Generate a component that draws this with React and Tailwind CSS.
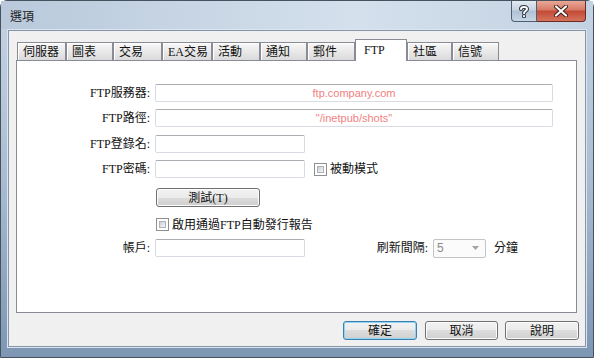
import React from "react";

const tabs = [
  { label: "伺服器", w: "w-[49px]" },
  { label: "圖表", w: "w-[47px]" },
  { label: "交易", w: "w-[49px]" },
  { label: "EA交易", w: "w-[50px]" },
  { label: "活動", w: "w-[48px]" },
  { label: "通知", w: "w-[47px]" },
  { label: "郵件", w: "w-[48px]" },
  { label: "FTP", w: "w-[52px]", active: true },
  { label: "社區", w: "w-[45px]" },
  { label: "信號", w: "w-[47px]" },
];

function Tab({ label, w, active }) {
  if (active) {
    return (
      <div
        className={`${w} relative z-10 -mb-px flex h-[22px] items-center border border-b-0 border-[#898c95] bg-white pb-[2px] pl-[8px]`}
      >
        {label}
      </div>
    );
  }
  return (
    <div
      className={`${w} flex h-[18px] items-center border border-b-0 border-[#898c95] bg-gradient-to-b from-[#f8f8f8] to-[#dadada] pl-[5px] shadow-[inset_1px_1px_0_#ffffff]`}
    >
      {label}
    </div>
  );
}

function TextBox({ w, children }) {
  return (
    <div
      className={`${w} flex h-[18px] items-center justify-center rounded-[2px] border border-[#d8dce2] border-t-[#abadb3] bg-white font-['Liberation_Sans',sans-serif] text-[11px] text-[#f27f7f]`}
    >
      {children}
    </div>
  );
}

function CheckBox() {
  return (
    <div className="h-[13px] w-[13px] shrink-0 border border-[#8e8f8f] bg-white p-[2px]">
      <div className="h-full w-full border border-[#aeb3b9] bg-gradient-to-br from-[#cbcfd5] to-[#f6f6f6]" />
    </div>
  );
}

function Button({ w, primary, children }) {
  return (
    <div
      className={`${w} flex h-[19px] items-center justify-center rounded-[3px] border bg-[linear-gradient(#f2f2f2,#ebebeb_50%,#dddddd_50%,#cfcfcf)] ${
        primary
          ? "border-[#3c7fb1] shadow-[inset_0_0_0_1px_#8fd5f3]"
          : "border-[#707070] shadow-[inset_0_0_0_1px_#fcfcfc]"
      }`}
    >
      {children}
    </div>
  );
}

function Row({ label, className = "", children }) {
  return (
    <div className={`flex h-[18px] items-center ${className}`}>
      <div className="w-[133px] text-right">{label}</div>
      <div className="ml-[5px] flex items-center">{children}</div>
    </div>
  );
}

export default function App() {
  return (
    <div className="h-[358px] w-[594px] bg-white font-['Liberation_Serif','Noto_Sans_CJK_TC',serif] text-[12px] leading-none text-[#111111]">
      <div className="flex h-full flex-col rounded-t-[7px] border border-[#47525f] bg-gradient-to-b from-[#c6d5e5] via-[#a9bcd1] to-[#7d96b2]">
        {/* title bar */}
        <div className="flex h-[28px] shrink-0 justify-between bg-[linear-gradient(90deg,#b9c9db,#d4e0ec_60%,#c3d2e2)] pr-[7px]">
          <div className="flex items-center pl-[9px] pt-[1px] font-['Noto_Sans_CJK_TC',sans-serif] text-[12px] text-[#1e1e1e]">
            選項
          </div>
          <div className="flex h-[21px]">
            <div className="flex w-[26px] items-center justify-center rounded-bl-[4px] border border-t-0 border-[#4f5f73] bg-[linear-gradient(#e2e9f1,#c7d3e0_45%,#b0c1d4_50%,#c8d6e5)]">
              <svg width="10" height="13" viewBox="0 0 10 13">
                <path d="M2 4 C2 1.5 8 1.2 8 4 C8 6 5 6 5 8.3" fill="none" stroke="#27323f" strokeWidth="4" strokeLinecap="round" />
                <circle cx="5" cy="11.2" r="2" fill="#27323f" />
                <path d="M2 4 C2 1.5 8 1.2 8 4 C8 6 5 6 5 8.3" fill="none" stroke="#ffffff" strokeWidth="2" strokeLinecap="round" />
                <circle cx="5" cy="11.2" r="1.1" fill="#ffffff" />
              </svg>
            </div>
            <div className="flex w-[49px] items-center justify-center rounded-br-[4px] border border-l-0 border-t-0 border-[#6b2a22] bg-[linear-gradient(#eaa798,#d67a66_45%,#c44a36_50%,#d4735c)]">
              <svg width="14" height="12" viewBox="0 0 14 12">
                <path d="M2 1.5 L12 10.5 M12 1.5 L2 10.5" stroke="#3b1a16" strokeWidth="4" strokeLinecap="round" />
                <path d="M2 1.5 L12 10.5 M12 1.5 L2 10.5" stroke="#ffffff" strokeWidth="2.2" strokeLinecap="round" />
              </svg>
            </div>
          </div>
        </div>

        {/* client area */}
        <div className="mx-[6px] mb-[9px] flex-1 border border-[#dce5ef]">
          <div className="flex h-full flex-col border border-[#8696aa] bg-[#f0f0f0] pt-[8px]">
            <div className="ml-[8px] flex h-[21px] items-end">
              {tabs.map((t) => (
                <Tab key={t.label} {...t} />
              ))}
            </div>

            <div className="ml-[7px] flex h-[253px] w-[561px] flex-col border border-[#898c95] bg-white pt-[23px]">
              <Row label="FTP服務器:">
                <TextBox w="w-[398px]">ftp.company.com</TextBox>
              </Row>
              <Row label="FTP路徑:" className="mt-[7px]">
                <TextBox w="w-[398px]">"/inetpub/shots"</TextBox>
              </Row>
              <Row label="FTP登錄名:" className="mt-[8px]">
                <TextBox w="w-[150px]" />
              </Row>
              <Row label="FTP密碼:" className="mt-[7px]">
                <TextBox w="w-[150px]" />
                <div className="ml-[9px] flex items-center gap-[3px]">
                  <CheckBox />
                  <span>被動模式</span>
                </div>
              </Row>
              <div className="ml-[139px] mt-[10px]">
                <Button w="w-[104px]">測試(T)</Button>
              </div>
              <div className="ml-[139px] mt-[11px] flex h-[13px] items-center gap-[3px]">
                <CheckBox />
                <span>啟用通過FTP自動發行報告</span>
              </div>
              <Row label="帳戶:" className="mt-[8px]">
                <TextBox w="w-[150px]" />
                <div className="ml-[70px] w-[53px] text-right">刷新間隔:</div>
                <div className="ml-[5px] flex h-[19px] w-[53px] items-center justify-between rounded-[2px] border border-[#c2c4c8] bg-[#fbfbfb] pl-[3px] pr-[6px] font-['Liberation_Sans',sans-serif] text-[12px] text-[#8a8a8a]">
                  <span>5</span>
                  <svg width="7" height="4" viewBox="0 0 7 4">
                    <path d="M0 0 H7 L3.5 4 Z" fill="#a3a3a3" />
                  </svg>
                </div>
                <div className="ml-[8px]">分鐘</div>
              </Row>
            </div>

            <div className="mt-[8px] flex justify-end pr-[6px]">
              <Button w="w-[74px]" primary>
                確定
              </Button>
              <div className="ml-[8px]">
                <Button w="w-[73px]">取消</Button>
              </div>
              <div className="ml-[7px]">
                <Button w="w-[74px]">說明</Button>
              </div>
            </div>
          </div>
        </div>
      </div>
    </div>
  );
}
